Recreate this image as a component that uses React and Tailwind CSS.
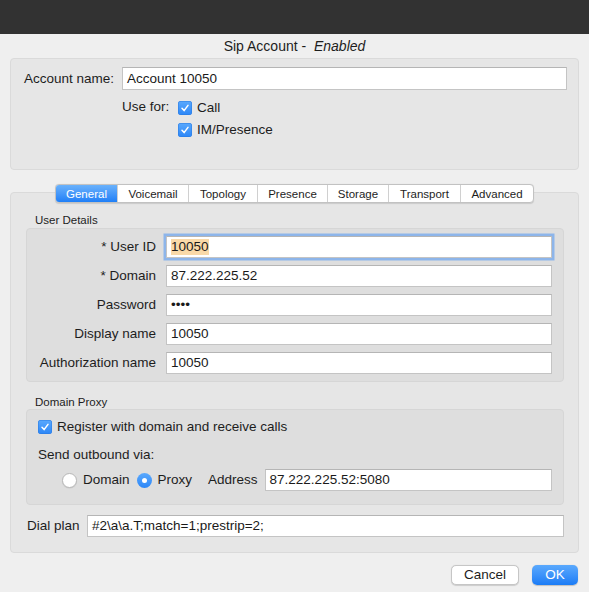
import React from "react";

const font = "font-['Liberation_Sans','Helvetica_Neue',Arial,sans-serif]";

const Field = ({ children, className = "" }) => (
  <div
    className={`flex h-[22px] items-center border border-[#c4c4c4] border-t-[#b5b5b5] bg-white px-[4px] text-[13.5px] text-[#1a1a1a] ${className}`}
  >
    {children}
  </div>
);

const Check = () => (
  <span className="flex h-[14px] w-[14px] items-center justify-center rounded-[3px] bg-gradient-to-b from-[#5aa9fd] to-[#2b86f7] shadow-[inset_0_0_0_0.5px_#2a7ae0]">
    <svg width="10" height="10" viewBox="0 0 10 10">
      <path d="M2 5.3 L4.1 7.6 L8 2.4" fill="none" stroke="white" strokeWidth="1.5" strokeLinecap="round" strokeLinejoin="round" />
    </svg>
  </span>
);

const Radio = ({ on }) =>
  on ? (
    <span className="flex h-[15px] w-[15px] items-center justify-center rounded-full bg-gradient-to-b from-[#5aa9fd] to-[#2b86f7]">
      <span className="h-[5px] w-[5px] rounded-full bg-white" />
    </span>
  ) : (
    <span className="h-[15px] w-[15px] rounded-full border border-[#b8b8b8] bg-white shadow-[0_0.5px_1px_rgba(0,0,0,0.1)]" />
  );

const tabs = [
  { label: "General", w: "w-[61px]" },
  { label: "Voicemail", w: "w-[71px]" },
  { label: "Topology", w: "w-[69px]" },
  { label: "Presence", w: "w-[70px]" },
  { label: "Storage", w: "w-[61px]" },
  { label: "Transport", w: "w-[72px]" },
  { label: "Advanced", w: "w-[73px]" },
];

const userRows = [
  { label: "* User ID", value: "10050", focus: true },
  { label: "* Domain", value: "87.222.225.52" },
  { label: "Password", value: "••••" },
  { label: "Display name", value: "10050" },
  { label: "Authorization name", value: "10050" },
];

export default function App() {
  return (
    <div className={`flex h-[592px] w-[589px] flex-col bg-[#efefef] text-[13.5px] leading-[16px] text-[#1d1d1d] ${font}`}>
      <div className="h-[34px] bg-[#323232]" />
      <div className="flex h-[24px] items-center justify-center text-[14px]">
        Sip Account -&nbsp;&nbsp;<i>Enabled</i>
      </div>

      <div className="mx-[10px] h-[112px] rounded-[4px] border border-[#dadada] bg-[#e6e6e6] pl-[13px] pr-[11px] pt-[8px]">
        <div className="flex items-center">
          <span className="w-[98px]">Account name:</span>
          <Field className="h-[23px] flex-1">Account 10050</Field>
        </div>
        <div className="mt-[10px] flex pl-[98px]">
          <span className="-mt-[1px] w-[56px]">Use for:</span>
          <div className="flex flex-col gap-[6px]">
            <div className="flex items-center gap-[5px]">
              <Check />
              <span>Call</span>
            </div>
            <div className="flex items-center gap-[5px]">
              <Check />
              <span>IM/Presence</span>
            </div>
          </div>
        </div>
      </div>

      <div className="mt-[14px] flex flex-col">
        <div className="relative z-10 flex justify-center">
          <div className="flex h-[19px] overflow-hidden rounded-[4px] border border-[#c2c2c2] bg-white text-[11.5px] shadow-[0_0.5px_1px_rgba(0,0,0,0.12)]">
            {tabs.map((t, i) => (
              <div
                key={t.label}
                className={`${t.w} flex items-center justify-center ${
                  i === 0
                    ? "bg-gradient-to-b from-[#69b1fb] to-[#1e7ff7] text-white"
                    : "border-l border-[#d0d0d0] text-[#1d1d1d]"
                }`}
              >
                {t.label}
              </div>
            ))}
          </div>
        </div>

        <div className="mx-[10px] -mt-[11px] h-[361px] rounded-[4px] border border-[#dadada] bg-[#e6e6e6] pl-[15px] pr-[14px] pt-[19px]">
          <div className="h-[16px] pl-[9px] text-[11.5px] leading-[16px]">User Details</div>
          <div className="flex h-[154px] flex-col gap-[7px] rounded-[4px] border border-[#d6d6d6] bg-[#dedede] pr-[11px] pt-[7px]">
            {userRows.map((r) => (
              <div key={r.label} className="flex items-center">
                <span className="w-[129px] text-right">{r.label}</span>
                <div className="ml-[10px] flex-1">
                  {r.focus ? (
                    <Field className="border-[#7ba4dc] shadow-[0_0_0_2.5px_#8db5ea]">
                      <span className="bg-[#f9d9a8]">{r.value}</span>
                    </Field>
                  ) : (
                    <Field>{r.value}</Field>
                  )}
                </div>
              </div>
            ))}
          </div>

          <div className="mt-[13px] h-[14px] pl-[9px] text-[11.5px] leading-[14px]">Domain Proxy</div>
          <div className="h-[96px] rounded-[4px] border border-[#d6d6d6] bg-[#dedede] pl-[11px] pr-[11px] pt-[9px]">
            <div className="flex h-[16px] items-center gap-[5px]">
              <Check />
              <span>Register with domain and receive calls</span>
            </div>
            <div className="mt-[12px] h-[16px]">Send outbound via:</div>
            <div className="mt-[6px] flex items-center pl-[24px]">
              <Radio />
              <span className="ml-[6px]">Domain</span>
              <span className="ml-[7px]">
                <Radio on />
              </span>
              <span className="ml-[6px]">Proxy</span>
              <span className="ml-[16px]">Address</span>
              <Field className="ml-[7px] flex-1">87.222.225.52:5080</Field>
            </div>
          </div>

          <div className="mt-[10px] flex items-center pl-[1px]">
            <span className="w-[60px]">Dial plan</span>
            <Field className="flex-1">#2\a\a.T;match=1;prestrip=2;</Field>
          </div>
        </div>
      </div>

      <div className="mt-[12px] flex justify-end gap-[13px] pr-[11px]">
        <button className="h-[20px] w-[68px] rounded-[5px] border border-[#c6c6c6] bg-white shadow-[0_0.5px_1px_rgba(0,0,0,0.15)]">
          Cancel
        </button>
        <button className="h-[20px] w-[46px] rounded-[5px] bg-gradient-to-b from-[#5aa9fd] to-[#1a7cf6] text-white shadow-[0_0.5px_1px_rgba(0,0,0,0.2)]">
          OK
        </button>
      </div>
    </div>
  );
}
